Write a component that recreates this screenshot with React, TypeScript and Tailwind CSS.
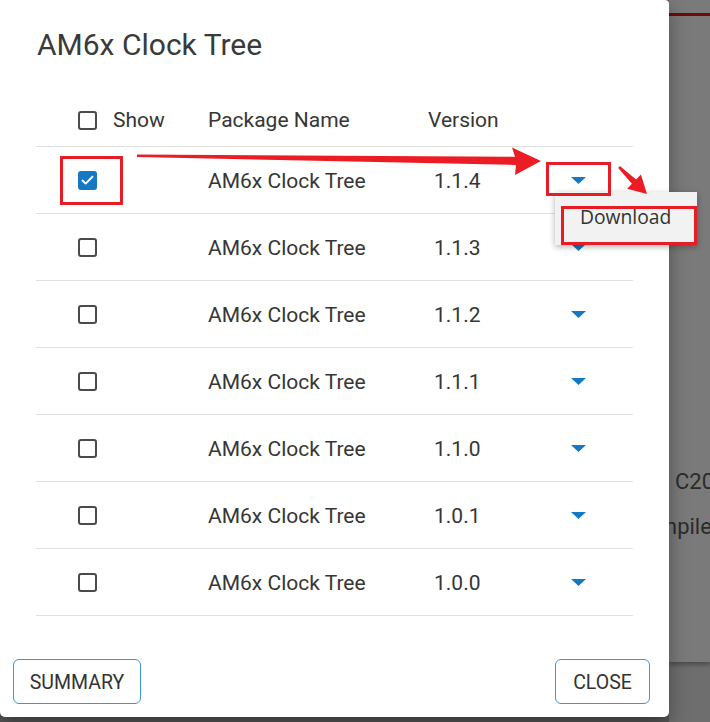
import { Check } from 'lucide-react'

const versions = ['1.1.4', '1.1.3', '1.1.2', '1.1.1', '1.1.0', '1.0.1', '1.0.0']

function Box({ checked }: { checked?: boolean }) {
  if (checked) {
    return (
      <span className="w-[19px] h-[19px] rounded-[3px] bg-[#1677c2] flex items-center justify-center">
        <Check className="w-[15px] h-[15px] text-white" strokeWidth={3} />
      </span>
    )
  }
  return <span className="w-[19px] h-[19px] rounded-[3px] border-2 border-[#4a4a4a] box-border" />
}

function Caret() {
  return (
    <svg width="15" height="7" viewBox="0 0 15 7">
      <path d="M0 0 H15 L7.5 7 Z" fill="#1479c4" />
    </svg>
  )
}

export default function App() {
  return (
    <div className="relative w-[710px] h-[722px] overflow-hidden bg-[#575757] flex font-['Roboto',sans-serif]">
      {/* Dialog */}
      <div className="relative z-10 w-[669px] h-[717px] shrink-0 bg-white rounded-b-[5px] rounded-tr-[4px] shadow-[0_8px_20px_rgba(0,0,0,0.35)] flex flex-col">
        <h1 className="pl-[37px] pt-[25px] h-[65px] leading-[40px] text-[30px] text-[#3a3a3a] font-normal">
          AM6x Clock Tree
        </h1>

        {/* Table */}
        <div className="mx-[36px] mt-[29px] text-[21px] text-[#363636]">
          <div className="flex items-center h-[53px] border-b border-[#e0e0e0]">
            <div className="w-[172px] pl-[42px] flex items-center gap-[16px]">
              <Box />
              <span className="pt-[2px]">Show</span>
            </div>
            <div className="w-[220px] pt-[2px]">Package Name</div>
            <div className="w-[120px] pt-[2px]">Version</div>
          </div>
          {versions.map((v, i) => (
            <div key={v} className="flex items-center h-[67px] border-b border-[#e0e0e0]">
              <div className="w-[172px] pl-[42px] flex items-center">
                <Box checked={i === 0} />
              </div>
              <div className="w-[220px] pt-[3px]">AM6x Clock Tree</div>
              <div className="w-[120px] pl-[6px] pt-[3px]">{v}</div>
              <div className="w-[60px] flex justify-center">
                <Caret />
              </div>
            </div>
          ))}
        </div>

        {/* Footer */}
        <div className="mt-auto mb-[13px] flex justify-between pl-[13px] pr-[19px]">
          <button className="h-[45px] w-[128px] pt-[2px] rounded-[6px] border border-[#3d97d3] text-[19.5px] text-[#333] uppercase">
            Summary
          </button>
          <button className="h-[45px] w-[95px] pt-[2px] rounded-[6px] border border-[#3d97d3] text-[19.5px] text-[#333] uppercase">
            Close
          </button>
        </div>

        {/* Dropdown menu */}
        <div className="absolute left-[555px] top-[192px] w-[142px] h-[53px] bg-[#f2f2f2] shadow-[0_2px_6px_rgba(0,0,0,0.3)] pl-[25px] pt-[12px] font-['Open_Sans',sans-serif] text-[19.3px] leading-[26px] text-[#333]">
          Download
        </div>
      </div>

      {/* Page behind the overlay */}
      <div className="flex-1 flex flex-col overflow-hidden">
        <div className="h-[662px] bg-[#7a7a7a] flex flex-col shadow-[0_3px_4px_rgba(0,0,0,0.3)] relative">
          <div className="mt-[13px] h-[3px] bg-[#6e0a0a]" />
          <div className="mt-[451px] -ml-[38px] text-[22px] leading-[30px] text-[#2b2b2b] whitespace-nowrap">
            <div className="pl-[44px]">C20</div>
            <div className="mt-[15px]">Compile</div>
          </div>
        </div>
        <div className="flex-1 bg-[#6e6e6e]" />
      </div>

      {/* Annotations */}
      <svg className="absolute inset-0 z-20 pointer-events-none" width="710" height="722">
        <g fill="none" stroke="#e81c24" strokeWidth="3">
          <rect x="61.5" y="157.5" width="60" height="46" />
          <rect x="547.5" y="163.5" width="62" height="31" />
          <rect x="562.5" y="207.5" width="133" height="36" />
        </g>
        <polygon
          fill="#ec1c24"
          points="137,154.5 515,156.8 512,147.5 541,161 515,175 516,165 137,157"
        />
        <polygon
          fill="#ec1c24"
          points="619.8,166.1 636.1,179.4 640.9,174.4 647,194 627.1,188.8 631.9,183.8 618.2,167.9"
        />
      </svg>
    </div>
  )
}
